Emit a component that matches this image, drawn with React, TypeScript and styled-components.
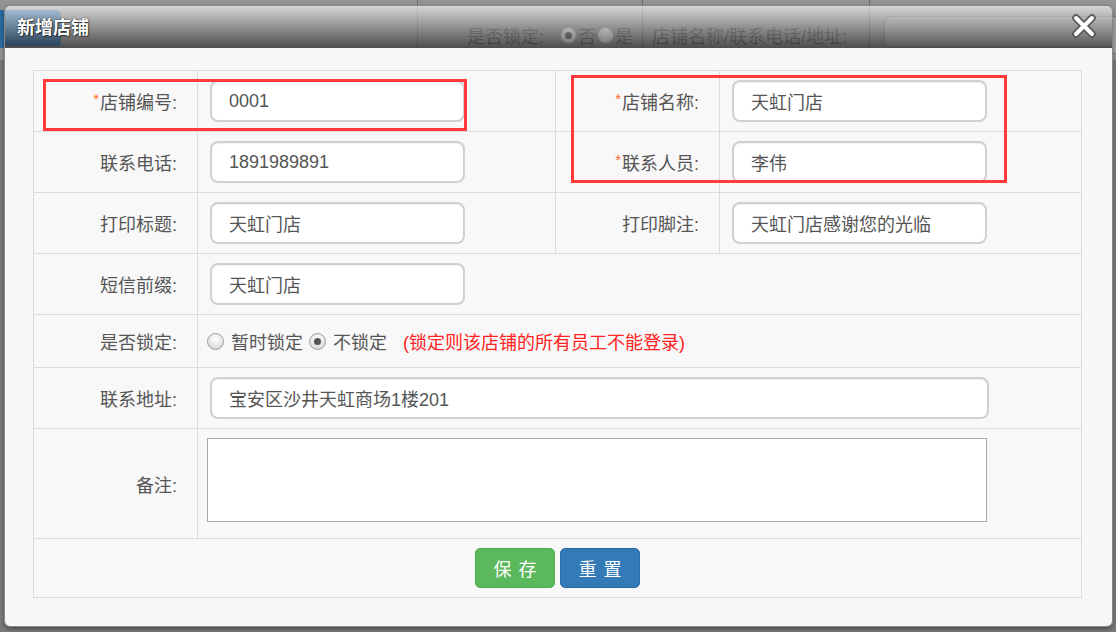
import React from 'react';
import styled, { createGlobalStyle } from 'styled-components';

const GlobalStyle = createGlobalStyle`
  html, body {
    margin: 0;
    padding: 0;
  }
  body {
    font-family: "Liberation Sans", "Noto Sans CJK SC", sans-serif;
    background: #777;
  }
  * {
    box-sizing: border-box;
  }
`;

// the dimmed page that sits behind the dialog
const Page = styled.div`
  position: relative;
  width: 1116px;
  height: 632px;
  overflow: hidden;
  background: #7a7a7a;
`;

const Toolbar = styled.div`
  display: flex;
  height: 60px;
  padding-top: 10px;
  background: #949494;
  color: #555;
  font-size: 18px;
`;

const ToolCell = styled.div<{ $w?: number; $end?: boolean }>`
  display: flex;
  align-items: center;
  gap: ${(p) => (p.$end ? '1px' : '0')};
  width: ${(p) => (p.$w ? `${p.$w}px` : 'auto')};
  flex: ${(p) => (p.$w ? 'none' : '1')};
  justify-content: ${(p) => (p.$end ? 'flex-end' : 'flex-start')};
  padding: 0 9px;
  margin-top: -10px;
  padding-top: 10px;
  border-right: 1px solid #6e6e6e;
  white-space: nowrap;
`;

const ToolButton = styled.div`
  width: 71px;
  height: 38px;
  margin-left: -19px;
  align-self: flex-start;
  border-radius: 5px;
  background: #2c6aa3;
`;

const ToolLabel = styled.span`
  margin-right: 15px;
`;

const ToolInput = styled.div`
  width: 240px;
  height: 38px;
  margin-left: 5px;
  border: 1px solid #7a7a7a;
  border-radius: 8px;
  background: #a6a6a6;
`;

// dialog
const Dialog = styled.div`
  position: absolute;
  left: 4px;
  top: 5px;
  width: 1109px;
  height: 622px;
  display: flex;
  flex-direction: column;
  border: 1px solid #8a8a8a;
  border-radius: 6px;
  overflow: hidden;
  box-shadow: 0 2px 4px rgba(0, 0, 0, 0.4);
`;

const TitleBar = styled.div`
  flex: none;
  height: 42px;
  display: flex;
  align-items: center;
  justify-content: space-between;
  padding: 0 15px 0 12px;
  background: linear-gradient(to bottom, rgba(255, 255, 255, 0.62), rgba(40, 40, 40, 0.6));
  border-bottom: 2px solid #505050;
`;

const Title = styled.span`
  color: #fff;
  font-family: "Noto Sans CJK SC", sans-serif;
  font-size: 18px;
  font-weight: bold;
  line-height: 1;
  text-shadow: 0 0 2px rgba(0, 0, 0, 0.7), 1px 1px 1px rgba(0, 0, 0, 0.5);
`;

const CloseButton = styled.button`
  width: 26px;
  height: 24px;
  padding: 0;
  border: none;
  background: none;
  cursor: pointer;
  display: flex;
  align-items: center;
  justify-content: center;
`;

const Body = styled.div`
  flex: 1;
  background: #f7f7f7;
  padding: 22px 0 0 28px;
`;

const Table = styled.div`
  display: grid;
  width: 1049px;
  grid-template-columns: 164px 358px 164px 362px;
  grid-template-rows: 61px 61px 61px 61px 53px 61px 110px 59px;
  border-top: 1px solid #dcdcdc;
  border-left: 1px solid #dcdcdc;
`;

const Cell = styled.div<{ $label?: boolean; $span?: number; $pad?: number; $center?: boolean }>`
  grid-column: span ${(p) => p.$span ?? 1};
  display: flex;
  align-items: center;
  justify-content: ${(p) => (p.$label ? 'flex-end' : p.$center ? 'center' : 'flex-start')};
  padding: ${(p) => (p.$label ? '0 20px 0 0' : `0 0 0 ${p.$pad ?? 12}px`)};
  border-right: 1px solid #dcdcdc;
  border-bottom: 1px solid #dcdcdc;
  background: #f8f8f8;
  color: #555;
  font-size: 18px;
  white-space: nowrap;
`;

const Required = styled.span`
  color: #ff6a2a;
  font-size: 15px;
  margin-top: -6px;
  margin-right: 1px;
`;

const LabelText = styled.span`
  display: flex;
  align-items: center;
`;

const TextInput = styled.input<{ $w?: number }>`
  width: ${(p) => p.$w ?? 255}px;
  height: 42px;
  padding: 0 0 0 17px;
  border: 2px solid #d0d0d0;
  border-radius: 8px;
  background: #fff;
  font-family: "Liberation Sans", "Noto Sans CJK SC", sans-serif;
  font-size: 18px;
  color: #555;
  box-shadow: inset 0 1px 1px rgba(0, 0, 0, 0.06);
  outline: none;
`;

const TextArea = styled.textarea`
  align-self: flex-start;
  margin-top: 9px;
  width: 780px;
  height: 84px;
  border: 1px solid #a9a9a9;
  background: #fff;
  resize: none;
  outline: none;
`;

const RadioGroup = styled.label`
  display: flex;
  align-items: center;
  gap: 7px;
  margin-right: 6px;
  color: #555;
`;

const RadioDot = styled.span<{ $checked?: boolean; $size?: number }>`
  position: relative;
  width: ${(p) => p.$size ?? 17}px;
  height: ${(p) => p.$size ?? 17}px;
  border-radius: 50%;
  border: 1px solid #9c9c9c;
  background: radial-gradient(circle at 50% 35%, #ffffff 0%, #e6e6e6 55%, #c9c9c9 100%);
  flex: none;

  &::after {
    content: '';
    display: ${(p) => (p.$checked ? 'block' : 'none')};
    position: absolute;
    left: 50%;
    top: 50%;
    width: 7px;
    height: 7px;
    margin: -3.5px 0 0 -3.5px;
    border-radius: 50%;
    background: #555;
  }
`;

const Hint = styled.span`
  margin-left: 10px;
  color: #ff2222;
`;

const Button = styled.button<{ $kind: 'save' | 'reset' }>`
  width: 80px;
  height: 40px;
  border-radius: 5px;
  border: 1px solid ${(p) => (p.$kind === 'save' ? '#4cae4c' : '#2e6da4')};
  background: ${(p) => (p.$kind === 'save' ? '#5cb85c' : '#337ab7')};
  color: #fff;
  font-family: "Noto Sans CJK SC", sans-serif;
  font-size: 18px;
  letter-spacing: 7px;
  padding: 0 0 0 7px;
  line-height: 1;
  cursor: pointer;

  & + & {
    margin-left: 5px;
  }
`;

const Highlight = styled.div<{ $x: number; $y: number; $w: number; $h: number }>`
  position: absolute;
  left: ${(p) => p.$x}px;
  top: ${(p) => p.$y}px;
  width: ${(p) => p.$w}px;
  height: ${(p) => p.$h}px;
  border: 3px solid #ff3a3a;
  pointer-events: none;
`;

const Label: React.FC<{ text: string; required?: boolean }> = ({ text, required }) => (
  <Cell $label>
    <LabelText>
      {required && <Required>*</Required>}
      {text}:
    </LabelText>
  </Cell>
);

const CloseIcon = () => (
  <svg width="26" height="24" viewBox="0 0 26 24">
    <g strokeLinecap="round">
      <path d="M5 4 L21 20 M21 4 L5 20" stroke="#5a5a5a" strokeWidth="7.5" />
      <path d="M5 4 L21 20 M21 4 L5 20" stroke="#fff" strokeWidth="4" />
    </g>
  </svg>
);

const App: React.FC = () => {
  return (
    <>
      <GlobalStyle />
      <Page>
        <Toolbar>
          <ToolCell $w={418}>
            <ToolButton />
          </ToolCell>
          <ToolCell $w={225} $end>
            <ToolLabel>是否锁定:</ToolLabel>
            <RadioDot $checked $size={17} />否
            <RadioDot $size={17} />是
          </ToolCell>
          <ToolCell $w={227}>店铺名称/联系电话/地址:</ToolCell>
          <ToolCell>
            <ToolInput />
          </ToolCell>
        </Toolbar>

        <Dialog>
          <TitleBar>
            <Title>新增店铺</Title>
            <CloseButton aria-label="关闭">
              <CloseIcon />
            </CloseButton>
          </TitleBar>
          <Body>
            <Table>
              <Label text="店铺编号" required />
              <Cell>
                <TextInput defaultValue="0001" />
              </Cell>
              <Label text="店铺名称" required />
              <Cell>
                <TextInput defaultValue="天虹门店" />
              </Cell>

              <Label text="联系电话" />
              <Cell>
                <TextInput defaultValue="1891989891" />
              </Cell>
              <Label text="联系人员" required />
              <Cell>
                <TextInput defaultValue="李伟" />
              </Cell>

              <Label text="打印标题" />
              <Cell>
                <TextInput defaultValue="天虹门店" />
              </Cell>
              <Label text="打印脚注" />
              <Cell>
                <TextInput defaultValue="天虹门店感谢您的光临" />
              </Cell>

              <Label text="短信前缀" />
              <Cell $span={3}>
                <TextInput defaultValue="天虹门店" />
              </Cell>

              <Label text="是否锁定" />
              <Cell $span={3} $pad={9}>
                <RadioGroup>
                  <RadioDot />
                  暂时锁定
                </RadioGroup>
                <RadioGroup>
                  <RadioDot $checked />
                  不锁定
                </RadioGroup>
                <Hint>(锁定则该店铺的所有员工不能登录)</Hint>
              </Cell>

              <Label text="联系地址" />
              <Cell $span={3}>
                <TextInput $w={779} defaultValue="宝安区沙井天虹商场1楼201" />
              </Cell>

              <Label text="备注" />
              <Cell $span={3} $pad={9}>
                <TextArea />
              </Cell>

              <Cell $span={4} $center $pad={0}>
                <Button $kind="save">保存</Button>
                <Button $kind="reset">重置</Button>
              </Cell>
            </Table>
          </Body>
        </Dialog>

        <Highlight $x={43} $y={79} $w={424} $h={52} />
        <Highlight $x={571} $y={75} $w={436} $h={108} />
      </Page>
    </>
  );
};

export default App;
